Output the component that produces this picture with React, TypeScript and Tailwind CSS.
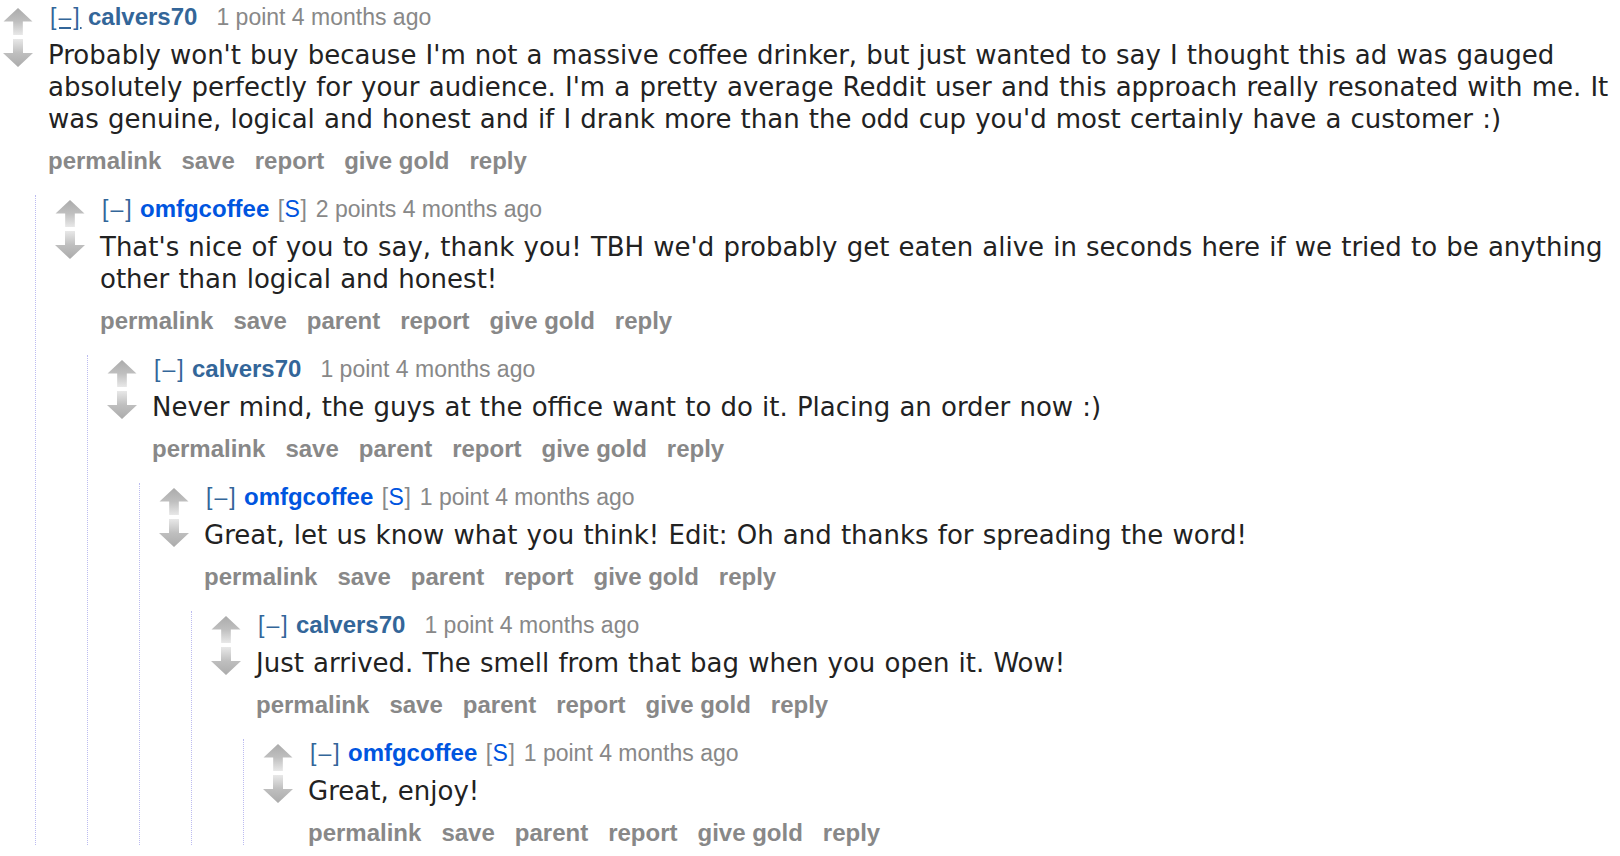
import React from "react";

type CommentData = {
    author: string;
    submitter?: boolean;
    score: string;
    body: string;
    focused?: boolean;
    buttons: string[];
    child?: CommentData;
};

const withParent = ["permalink", "save", "parent", "report", "give gold", "reply"];

const thread: CommentData = {
    author: "calvers70",
    score: "1 point",
    focused: true,
    body: "Probably won't buy because I'm not a massive coffee drinker, but just wanted to say I thought this ad was gauged absolutely perfectly for your audience. I'm a pretty average Reddit user and this approach really resonated with me. It was genuine, logical and honest and if I drank more than the odd cup you'd most certainly have a customer :)",
    buttons: ["permalink", "save", "report", "give gold", "reply"],
    child: {
        author: "omfgcoffee",
        submitter: true,
        score: "2 points",
        body: "That's nice of you to say, thank you! TBH we'd probably get eaten alive in seconds here if we tried to be anything other than logical and honest!",
        buttons: withParent,
        child: {
            author: "calvers70",
            score: "1 point",
            body: "Never mind, the guys at the office want to do it. Placing an order now :)",
            buttons: withParent,
            child: {
                author: "omfgcoffee",
                submitter: true,
                score: "1 point",
                body: "Great, let us know what you think! Edit: Oh and thanks for spreading the word!",
                buttons: withParent,
                child: {
                    author: "calvers70",
                    score: "1 point",
                    body: "Just arrived. The smell from that bag when you open it. Wow!",
                    buttons: withParent,
                    child: {
                        author: "omfgcoffee",
                        submitter: true,
                        score: "1 point",
                        body: "Great, enjoy!",
                        buttons: withParent,
                    },
                },
            },
        },
    },
};

function VoteArrow({ down }: { down?: boolean }) {
    const id = down ? "downGrad" : "upGrad";
    return (
        <svg width="30" height={down ? 28 : 27} viewBox="0 0 30 28" className="block">
            <defs>
                <linearGradient id={id} x1="0" y1={down ? "1" : "0"} x2="0" y2={down ? "0" : "1"}>
                    <stop offset="0" stopColor="#ababab" />
                    <stop offset="0.5" stopColor="#bfbfbf" />
                    <stop offset="1" stopColor="#e8e8e8" />
                </linearGradient>
            </defs>
            {down ? (
                <path d="M10 0 H20 V14 H30 L15 28 L0 14 H10 Z" fill={`url(#${id})`} />
            ) : (
                <path d="M15 0 L30 14 H20 V28 H10 V14 H0 Z" fill={`url(#${id})`} />
            )}
        </svg>
    );
}

function Comment({ comment }: { comment: CommentData }) {
    return (
        <div className="pt-[2px]">
            <div className="flex items-start">
                {/* vote arrows */}
                <div className="w-[30px] shrink-0 mt-[3px] flex flex-col gap-[4px]">
                    <VoteArrow />
                    <VoteArrow down />
                </div>

                <div className="ml-[15px] flex-1 min-w-0">
                    {/* tagline */}
                    <div className="h-[24px] leading-[24px] text-[23px] font-['Liberation_Sans',Arial,sans-serif] text-[#888] whitespace-nowrap">
                        <span className={`ml-[2px] text-[#369] tracking-[2px] ${comment.focused ? "underline" : ""}`}>[–]</span>{" "}
                        <span className={`font-bold text-[24px] ${comment.submitter ? "text-[#0055df]" : "text-[#369]"}`}>
                            {comment.author}
                        </span>
                        {comment.submitter ? (
                            <>
                                {" "}
                                <span className="ml-[2px] mr-[2px] tracking-[0.5px]">
                                    [<span className="text-[#0055df]">S</span>]
                                </span>{" "}
                            </>
                        ) : (
                            <span className="inline-block w-[19px]" />
                        )}
                        {comment.score} 4 months ago
                    </div>

                    {/* body */}
                    <p className="mt-[10px] max-w-[1562px] text-[26px] leading-[32px] [word-spacing:0.9px] text-[#222] font-['DejaVu_Sans',Verdana,sans-serif]">
                        {comment.body}
                    </p>

                    {/* buttons */}
                    <ul className="mt-[14px] flex gap-[20px] h-[24px] leading-[24px] text-[24px] font-bold text-[#888] font-['Liberation_Sans',Arial,sans-serif]">
                        {comment.buttons.map((b) => (
                            <li key={b}>{b}</li>
                        ))}
                    </ul>
                </div>
            </div>

            {comment.child && (
                <div className="ml-[32px] mt-[22px] border-l border-dotted border-[#bcbcf0] pl-[19px]">
                    <Comment comment={comment.child} />
                </div>
            )}
        </div>
    );
}

export default function App() {
    return (
        <div className="min-h-screen bg-white pl-[3px] pt-[3px] pr-[6px]">
            <Comment comment={thread} />
        </div>
    );
}
